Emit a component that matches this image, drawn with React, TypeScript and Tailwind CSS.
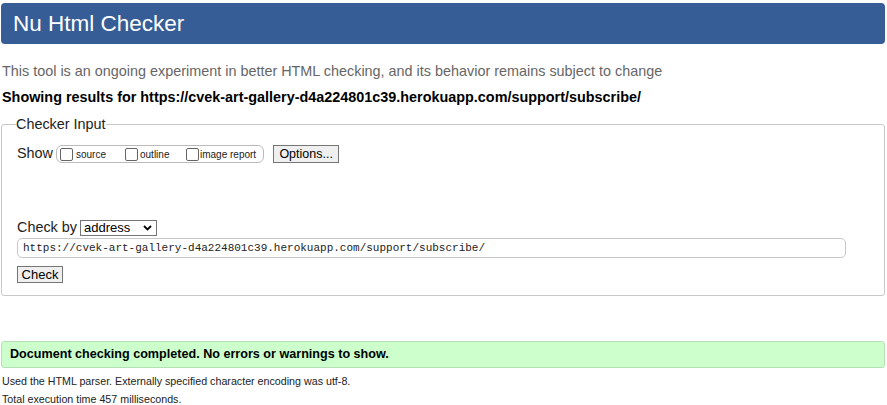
export default function App() {
  return (
    <div className="min-h-screen bg-white font-['Liberation_Sans',Arial,sans-serif] text-black px-[1px] pt-[3px]">
      {/* Header */}
      <h1 className="h-[41px] bg-[#365d95] rounded-[4px] text-white text-[22.5px] leading-[41px] pl-[12px] mr-[1px]">
        Nu Html Checker
      </h1>

      <p className="mt-[17px] pl-[1px] text-[14.4px] leading-[20px] text-[#666]">
        This tool is an ongoing experiment in better HTML checking, and its behavior remains subject to change
      </p>
      <p className="mt-[6px] pl-[1px] text-[14.4px] leading-[20px] font-bold">
        Showing results for https://cvek-art-gallery-d4a224801c39.herokuapp.com/support/subscribe/
      </p>

      {/* Checker input */}
      <fieldset className="mt-[8px] mr-[1px] border border-[#c8c8c8] rounded-[3px] pl-[15px] pr-[38px] pb-[9px]">
        <legend className="ml-[-1px] px-0 text-[14.4px] leading-[18px] text-[#222]">Checker Input</legend>

        <div className="flex items-center mt-[11px] h-[20px]">
          <span className="text-[14.4px] text-[#222] mr-[3px]">Show</span>
          <div className="flex items-center h-[18px] border border-[#bbb] rounded-[6px] pl-[3px] pr-[7px]">
            <label className="flex items-end text-[10px] leading-[11px] text-[#222] w-[65px]">
              <span className="inline-block w-[13px] h-[13px] border border-[#666] rounded-[2px] mr-[3px] mb-[-1px]" />
              source
            </label>
            <label className="flex items-end text-[10px] leading-[11px] text-[#222] w-[61px]">
              <span className="inline-block w-[13px] h-[13px] border border-[#666] rounded-[2px] mr-[2px] mb-[-1px]" />
              outline
            </label>
            <label className="flex items-end text-[10px] leading-[11px] text-[#222]">
              <span className="inline-block w-[13px] h-[13px] border border-[#666] rounded-[2px] mr-[1px] mb-[-1px]" />
              image report
            </label>
          </div>
          <button className="ml-[9px] h-[18px] w-[66px] border border-[#767676] bg-[#efefef] text-[12.5px] leading-[16px] text-black">
            Options...
          </button>
        </div>

        <div className="flex items-center mt-[55px] h-[18px]">
          <span className="text-[14.4px] text-[#222] mr-[3px]">Check by</span>
          <div className="flex items-center justify-between w-[77px] h-[16px] border border-[#767676] pl-[3px] pr-[4px] text-[13px] leading-[14px]">
            address
            <svg width="9" height="6" viewBox="0 0 9 6">
              <path d="M1 1l3.5 3.5L8 1" fill="none" stroke="#000" strokeWidth="1.8" />
            </svg>
          </div>
        </div>

        <div className="mt-[1px] h-[20px] border border-[#c8c8c8] rounded-[5px] pl-[5px] flex items-center font-['Liberation_Mono','Courier_New',monospace] text-[11px] text-[#222]">
          https://cvek-art-gallery-d4a224801c39.herokuapp.com/support/subscribe/
        </div>

        <button className="mt-[8px] h-[17px] w-[46px] border border-[#767676] bg-[#efefef] text-[13px] leading-[15px] text-black">
          Check
        </button>
      </fieldset>

      {/* Result */}
      <div className="mt-[45px] mr-[1px] h-[27px] bg-[#ccffcc] border border-[#b5dfb5] rounded-[3px] pl-[8px] flex items-center text-[12.6px] font-bold">
        Document checking completed. No errors or warnings to show.
      </div>

      <p className="mt-[5px] pl-[1px] text-[10.7px] leading-[16px] text-[#222]">
        Used the HTML parser. Externally specified character encoding was utf-8.
      </p>
      <p className="mt-[2px] pl-[1px] text-[10.7px] leading-[16px] text-[#222]">Total execution time 457 milliseconds.</p>
    </div>
  )
}
